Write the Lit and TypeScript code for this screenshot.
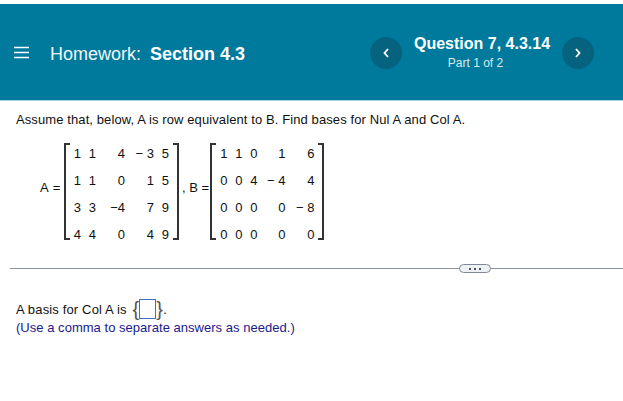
import { LitElement, html, css } from "lit";
import { customElement } from "lit/decorators.js";

const A = [["1","1","4","− 3","5"],["1","1","0","1","5"],["3","3","−4","7","9"],["4","4","0","4","9"]];
const B = [["1","1","0","1","6"],["0","0","4","− 4","4"],["0","0","0","0","− 8"],["0","0","0","0","0"]];

@customElement("app-root")
export class AppRoot extends LitElement {
  static styles = css`
    :host { display: block; width: 623px; height: 401px; background: #fff; font-family: "Liberation Sans", Arial, sans-serif; color: #111; overflow: hidden; }
    .top { height: 4px; }
    header { height: 96px; background: #007a9c; border-bottom: 1px solid #a9d3de; display: flex; align-items: center; color: #fff; padding: 0 29px 0 14px; box-sizing: content-box; }
    .menu { width: 15px; height: 13px; display: block; margin-right: 21px; margin-top: 1px; }
    .title { font-size: 18px; flex: 1; color: #f0f7fa; margin-top: 5px; }
    .title b { color: #fff; margin-left: 4px; }
    .nav { width: 32px; height: 32px; border-radius: 50%; background: #06637f; display: flex; align-items: center; justify-content: center; margin-top: 2px; }
    .nav svg { width: 8px; height: 10px; }
    .q { width: 160px; text-align: center; margin-top: 2px; }
    .q b { display: block; font-size: 16px; line-height: 20px; }
    .q span { display: block; font-size: 12px; line-height: 18px; margin-right: 13px; color: #d6eaf0; }
    main { padding: 11px 0 0 16px; font-size: 13px; }
    p { margin: 0; line-height: 16px; letter-spacing: 0.1px; }
    .eq { display: flex; align-items: center; margin-top: 15px; height: 97px; line-height: 16px; }
    .lab { white-space: pre; margin-bottom: 8px; }
    .la { margin-left: 24px; width: 24px; letter-spacing: 0.6px; }
    .lb { margin-left: 3px; width: 28px; }
    .m { display: grid; grid-auto-rows: 26.75px; align-items: center; justify-items: end; box-sizing: border-box; height: 97px; position: relative; border-left: 2px solid #333; border-right: 2px solid #333; }
    .m span { margin-bottom: 4px; }
    .m::before, .m::after { content: ""; position: absolute; top: 0; bottom: 0; width: 4px; border-top: 2px solid #333; border-bottom: 2px solid #333; }
    .m::before { left: 0; }
    .m::after { right: 0; }
    .ma { width: 115px; grid-template-columns: 7px 15px 29px 29px 15px; padding-left: 8px; }
    .mb { width: 114px; grid-template-columns: 7px 15px 15px 28px 29px; padding-left: 8.5px; }
    .rule { margin: 28px 0 0 10px; width: 613px; height: 1px; background: #8a929b; position: relative; }
    .more { position: absolute; left: 449px; top: -4px; width: 30px; height: 7px; border: 1px solid #7f8a96; border-radius: 5px; background: #eef0f4; display: flex; align-items: center; justify-content: center; gap: 3px; box-sizing: content-box; }
    .more i { width: 2px; height: 2px; background: #4a5560; }
    .ans { margin-top: 20px; display: flex; align-items: center; height: 18px; letter-spacing: 0.15px; }
    .br { font-size: 20px; color: #555; line-height: 18px; font-weight: 400; }
    .br.open { margin-left: 2px; }
    .box { width: 15px; height: 18px; border: 1px solid #3a6fc4; display: inline-block; background: #fff; }
    .note { color: #1a1a8c; line-height: 17px; margin-top: 1px; letter-spacing: 0.03px; }
  `;

  private matrix(rows: string[][], cls: string) {
    return html`<div class="m ${cls}">${rows.flat().map((c) => html`<span>${c}</span>`)}</div>`;
  }

  render() {
    return html`
      <div class="top"></div>
      <header>
        <svg class="menu" viewBox="0 0 15 13" aria-hidden="true"><path d="M0 1.5h15M0 6.5h15M0 11.5h15" stroke="#fff" stroke-width="1.4"/></svg>
        <div class="title">Homework: <b>Section 4.3</b></div>
        <div class="nav"><svg viewBox="0 0 8 10"><path d="M6 1L2.5 5L6 9" fill="none" stroke="#fff" stroke-width="1.8"/></svg></div>
        <div class="q"><b>Question 7, 4.3.14</b><span>Part 1 of 2</span></div>
        <div class="nav"><svg viewBox="0 0 8 10"><path d="M2 1L5.5 5L2 9" fill="none" stroke="#fff" stroke-width="1.8"/></svg></div>
      </header>
      <main>
        <p>Assume that, below, A is row equivalent to B. Find bases for Nul A and Col A.</p>
        <div class="eq">
          <span class="lab la">A =</span>
          ${this.matrix(A, "ma")}
          <span class="lab lb">, B =</span>
          ${this.matrix(B, "mb")}
        </div>
      </main>
      <div class="rule"><div class="more"><i></i><i></i><i></i></div></div>
      <main>
        <div class="ans">A basis for Col A is&nbsp;<span class="br open">{</span><span class="box"></span><span class="br">}</span>.</div>
        <p class="note">(Use a comma to separate answers as needed.)</p>
      </main>
    `;
  }
}
